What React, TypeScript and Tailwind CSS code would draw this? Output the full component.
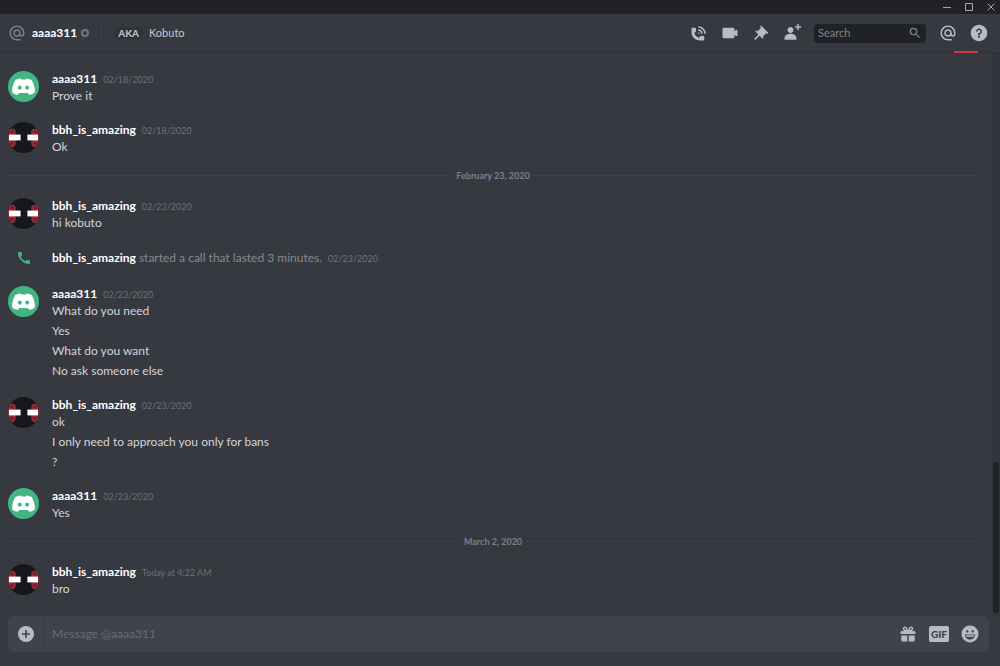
import type { ReactNode } from 'react';
import { MdAlternateEmail, MdCall, MdSearch } from 'react-icons/md';

interface Author {
  name: string;
  avatar: 'clyde' | 'mask';
}

type ChatItem =
  | { kind: 'group'; author: Author; date: string; lines: string[] }
  | { kind: 'call'; author: Author; date: string; text: string }
  | { kind: 'divider'; label: string };

const aaaa: Author = { name: 'aaaa311', avatar: 'clyde' };
const bbh: Author = { name: 'bbh_is_amazing', avatar: 'mask' };

const items: ChatItem[] = [
  { kind: 'group', author: aaaa, date: '02/18/2020', lines: ['Prove it'] },
  { kind: 'group', author: bbh, date: '02/18/2020', lines: ['Ok'] },
  { kind: 'divider', label: 'February 23, 2020' },
  { kind: 'group', author: bbh, date: '02/23/2020', lines: ['hi kobuto'] },
  { kind: 'call', author: bbh, date: '02/23/2020', text: 'started a call that lasted 3 minutes.' },
  {
    kind: 'group',
    author: aaaa,
    date: '02/23/2020',
    lines: ['What do you need', 'Yes', 'What do you want', 'No ask someone else'],
  },
  {
    kind: 'group',
    author: bbh,
    date: '02/23/2020',
    lines: ['ok', 'I only need to approach you only for bans', '?'],
  },
  { kind: 'group', author: aaaa, date: '02/23/2020', lines: ['Yes'] },
  { kind: 'divider', label: 'March 2, 2020' },
  { kind: 'group', author: bbh, date: 'Today at 4:22 AM', lines: ['bro'] },
];

const headerActions = [
  {
    label: 'Start Voice Call',
    path: 'M11 5V3C16.515 3 21 7.486 21 13H19C19 8.589 15.411 5 11 5ZM17 13H15C15 10.795 13.206 9 11 9V7C14.309 7 17 9.692 17 13ZM11 11V13H13C13 11.896 12.105 11 11 11ZM14 16H18C18.553 16 19 16.447 19 17V21C19 21.553 18.553 22 18 22H13C6.925 22 2 17.075 2 11V6C2 5.447 2.448 5 3 5H7C7.553 5 8 5.447 8 6V10C8 10.553 7.553 11 7 11H6C6.063 14.938 9 18 13 18V17C13 16.447 13.447 16 14 16Z',
  },
  {
    label: 'Start Video Call',
    path: 'M21.526 8.149C21.231 7.966 20.862 7.951 20.553 8.105L18 9.382V7C18 5.897 17.103 5 16 5H4C2.897 5 2 5.897 2 7V17C2 18.104 2.897 19 4 19H16C17.103 19 18 18.104 18 17V14.618L20.553 15.894C20.694 15.965 20.847 16 21 16C21.183 16 21.365 15.949 21.526 15.851C21.82 15.668 22 15.347 22 15V9C22 8.653 21.82 8.332 21.526 8.149Z',
  },
  {
    label: 'Pinned Messages',
    path: 'M22 12L12.101 2.101L10.686 3.514L12.101 4.929L7.151 9.879L5.736 8.465L4.322 9.88L8.565 14.122L2.908 19.778L4.322 21.192L9.979 15.536L14.222 19.778L15.636 18.364L14.222 16.95L19.171 12L20.586 13.414L22 12Z',
  },
  {
    label: 'Add Friends to DM',
    path: 'M21 3H24V5H21V8H19V5H16V3H19V0H21V3ZM10 12C12.205 12 14 10.205 14 8C14 5.795 12.205 4 10 4C7.795 4 6 5.795 6 8C6 10.205 7.795 12 10 12ZM10 13C5.289 13 2 15.467 2 19V21H18V19C18 15.467 14.711 13 10 13Z',
  },
];

const helpPath =
  'M12 1C5.9 1 1 5.9 1 12C1 18.1 5.9 23 12 23C18.1 23 23 18.1 23 12C23 5.9 18.1 1 12 1ZM12 18.5C11.2 18.5 10.6 17.9 10.6 17.1C10.6 16.3 11.2 15.7 12 15.7C12.8 15.7 13.4 16.3 13.4 17.1C13.4 17.9 12.8 18.5 12 18.5ZM13 13.875V15H11V12H12C13.104 12 14 11.103 14 10C14 8.896 13.104 8 12 8C10.896 8 10 8.896 10 10H8C8 7.795 9.795 6 12 6C14.205 6 16 7.795 16 10C16 11.861 14.723 13.429 13 13.875Z';

const giftPath =
  'M16.886 8H20C21.104 8 22 8.896 22 10V12H2V10C2 8.896 2.897 8 4 8H7.114C6.663 7.764 6.236 7.477 5.879 7.121C4.709 5.951 4.709 4.048 5.879 2.879C7.012 1.746 8.986 1.746 10.121 2.877C11.758 4.514 11.979 7.595 11.998 7.941L12 8L12.002 7.941C12.022 7.595 12.242 4.515 13.879 2.878C15.014 1.745 16.986 1.746 18.121 2.877C19.29 4.049 19.29 5.952 18.121 7.121C17.764 7.477 17.337 7.764 16.886 8ZM7.293 5.707C6.903 5.316 6.903 4.682 7.293 4.292C7.481 4.103 7.732 4 8 4C8.268 4 8.519 4.103 8.707 4.292C9.297 4.882 9.641 5.94 9.825 6.822C8.945 6.639 7.879 6.293 7.293 5.707ZM14.174 6.824C14.359 5.941 14.702 4.883 15.293 4.293C15.481 4.103 15.732 4 16 4C16.268 4 16.519 4.103 16.706 4.291C17.096 4.682 17.097 5.316 16.707 5.707C16.116 6.298 15.057 6.642 14.174 6.824ZM3 14H11V22H5C3.9 22 3 21.1 3 20V14ZM13 14V22H19C20.104 22 21 21.104 21 20V14H13Z';

const Glyph = ({ path }: { path: string }) => (
  <svg viewBox="0 0 24 24" className="size-[18px]" fill="currentColor" fillRule="evenodd" aria-hidden="true">
    <path d={path} />
  </svg>
);

const IconButton = ({ label, children }: { label: string; children: ReactNode }) => (
  <button type="button" aria-label={label} className="shrink-0 text-[#b9bbc3] hover:text-white">
    {children}
  </button>
);

const Avatar = ({ type }: { type: Author['avatar'] }) => {
  if (type === 'clyde') {
    return (
      <svg viewBox="0 0 32 32" className="size-[31px]" aria-hidden="true">
        <circle cx="16" cy="16" r="16" fill="#43b581" />
        <path
          fill="#fff"
          fillRule="evenodd"
          d="M7.6 9.4C9.4 8.4 11.2 7.9 13.1 7.8L13.7 8.8H18.3L18.9 7.8C20.8 7.9 22.6 8.4 24.4 9.4C26.6 13.2 27.9 17.4 27.8 22C26 23.8 24 24.5 21.8 24.6L20.4 22.8H11.6L10.2 24.6C8 24.5 6 23.8 4.2 22C4.1 17.4 5.4 13.2 7.6 9.4ZM12.2 14.9C11.1 14.9 10.2 15.9 10.2 17.1C10.2 18.3 11.1 19.3 12.2 19.3C13.3 19.3 14.2 18.3 14.2 17.1C14.2 15.9 13.3 14.9 12.2 14.9ZM19.8 14.9C18.7 14.9 17.8 15.9 17.8 17.1C17.8 18.3 18.7 19.3 19.8 19.3C20.9 19.3 21.8 18.3 21.8 17.1C21.8 15.9 20.9 14.9 19.8 14.9Z"
        />
      </svg>
    );
  }
  return (
    <svg viewBox="0 0 32 32" className="size-[31px]" aria-hidden="true">
      <clipPath id="avatar-round">
        <circle cx="16" cy="16" r="16" />
      </clipPath>
      <g clipPath="url(#avatar-round)">
        <rect width="32" height="32" fill="#17161a" />
        <path fill="#8f2b35" d="M0 7H6L8 9V23L6 26H0ZM32 7H26L24 9V23L26 26H32Z" />
        <path fill="#5a1d26" d="M3 9H5V11H3ZM3 21H5V23H3ZM27 9H29V11H27ZM27 21H29V23H27Z" />
        <rect x="1" y="13" width="12" height="6" fill="#fff" />
        <rect x="20" y="13" width="11" height="6" fill="#fff" />
      </g>
    </svg>
  );
};

const Timestamp = ({ children }: { children: ReactNode }) => (
  <time className="ml-1.5 text-[9px] font-normal text-[#6c6f78]">{children}</time>
);

const MessageRow = ({ item }: { item: ChatItem }) => {
  if (item.kind === 'divider') {
    return (
      <li className="mt-4 flex h-[9px] items-center gap-1 pr-2 text-[9px] font-bold text-[#7c7f88]">
        <span className="h-px flex-1 bg-[#3e4149]" />
        {item.label}
        <span className="h-px flex-1 bg-[#3e4149]" />
      </li>
    );
  }

  if (item.kind === 'call') {
    return (
      <li className="mt-[17px] flex h-5 items-center">
        <span className="flex w-11 shrink-0 pl-2">
          <MdCall className="size-4 text-[#43b581]" />
        </span>
        <p className="text-[12px] text-[#868992]">
          <strong className="font-bold text-white">{item.author.name}</strong> {item.text}
          <Timestamp>{item.date}</Timestamp>
        </p>
      </li>
    );
  }

  return (
    <li className="mt-[17px] flex">
      <div className="-mb-1 w-11 shrink-0 pt-px">
        <Avatar type={item.author.avatar} />
      </div>
      <div className="min-w-0">
        <div className="flex h-[17px] items-baseline leading-[17px]">
          <h3 className="text-[12px] font-bold text-white">{item.author.name}</h3>
          <Timestamp>{item.date}</Timestamp>
        </div>
        {item.lines.map((line) => (
          <p key={line} className="mb-[3px] text-[12px] leading-[17px] text-[#d4d5d9] last:mb-0">
            {line}
          </p>
        ))}
      </div>
    </li>
  );
};

const App = () => (
  <div className="flex h-screen flex-col bg-[#373941] font-[Lato,sans-serif] text-[#d4d5d9]">
    <div className="flex h-3.5 shrink-0 items-center justify-end gap-3 bg-[#202226] pr-1 text-[#a5a7ad]">
      <button type="button" aria-label="Minimize">
        <svg viewBox="0 0 10 10" className="size-2.5" fill="none" stroke="currentColor">
          <path d="M1 5.5H9" />
        </svg>
      </button>
      <button type="button" aria-label="Maximize">
        <svg viewBox="0 0 10 10" className="size-2.5" fill="none" stroke="currentColor">
          <path d="M1.5 1.5H8.5V8.5H1.5Z" />
        </svg>
      </button>
      <button type="button" aria-label="Close">
        <svg viewBox="0 0 10 10" className="size-2.5" fill="none" stroke="currentColor">
          <path d="M1.5 1.5L8.5 8.5M8.5 1.5L1.5 8.5" />
        </svg>
      </button>
    </div>

    <header className="relative flex h-[39px] shrink-0 items-center gap-[13px] border-b border-[#2d2f36] pr-3 pl-2">
      <div className="flex min-w-0 flex-1 items-center">
        <MdAlternateEmail className="size-[18px] shrink-0 text-[#7c7f88]" />
        <h1 className="ml-1.5 text-[12px] font-bold text-white">aaaa311</h1>
        <span className="ml-1 size-2 shrink-0 rounded-full border-2 border-[#747680]" />
        <span className="ml-3 h-4 w-px bg-[#3e4149]" />
        <span className="ml-3 rounded-full bg-[#303238] px-1 text-[10px] leading-3 font-bold text-[#c5c6cb]">AKA</span>
        <span className="ml-1.5 text-[11px] text-[#c5c6cb]">Kobuto</span>
      </div>
      {headerActions.map((action) => (
        <IconButton key={action.label} label={action.label}>
          <Glyph path={action.path} />
        </IconButton>
      ))}
      <label className="flex h-[19px] w-28 items-center rounded-sm bg-[#202226] px-1">
        <input
          type="text"
          placeholder="Search"
          aria-label="Search"
          className="min-w-0 flex-1 bg-transparent text-[11px] outline-none placeholder:text-[#82848c]"
        />
        <MdSearch className="size-3.5 shrink-0 text-[#82848c]" />
      </label>
      <IconButton label="Mentions">
        <MdAlternateEmail className="size-[18px]" />
      </IconButton>
      <IconButton label="Help">
        <Glyph path={helpPath} />
      </IconButton>
      <span className="absolute right-[22px] -bottom-px h-0.5 w-6 bg-[#c93a40]" />
    </header>

    <main className="flex min-h-0 flex-1">
      <ol className="min-w-0 flex-1 overflow-hidden pr-1.5 pl-2">
        {items.map((item, index) => (
          <MessageRow key={index} item={item} />
        ))}
      </ol>
      <div className="flex w-2 shrink-0 flex-col justify-end bg-[#33353c] px-px pb-[3px]">
        <div className="h-[27%] rounded-full bg-[#202127]" />
      </div>
    </main>

    <form className="mr-[11px] mb-3.5 ml-2 flex h-9 shrink-0 items-center rounded-md bg-[#40434b] pr-2.5">
      <div className="flex h-full w-9 shrink-0 items-center justify-center border-r border-[#393c43]">
        <IconButton label="Attach file">
          <svg viewBox="0 0 18 18" className="size-[18px]" aria-hidden="true">
            <circle cx="9" cy="9" r="8" fill="currentColor" />
            <path d="M9 5V13M5 9H13" stroke="#40434b" strokeWidth="1.6" />
          </svg>
        </IconButton>
      </div>
      <input
        type="text"
        aria-label="Message @aaaa311"
        placeholder="Message @aaaa311"
        className="min-w-0 flex-1 bg-transparent px-2 text-[12px] outline-none placeholder:text-[#686b74]"
      />
      <div className="flex items-center gap-3">
        <IconButton label="Send a gift">
          <Glyph path={giftPath} />
        </IconButton>
        <IconButton label="Open GIF picker">
          <span className="block h-4 w-5 rounded-xs bg-[#b9bbc3] text-center text-[10px] leading-4 font-black text-[#40434b]">
            GIF
          </span>
        </IconButton>
        <IconButton label="Select emoji">
          <svg viewBox="0 0 18 18" className="size-[18px]" aria-hidden="true">
            <circle cx="9" cy="9" r="8.5" fill="currentColor" />
            <ellipse cx="6.3" cy="6.3" rx="1" ry="1.4" fill="#40434b" />
            <ellipse cx="11.7" cy="6.3" rx="1" ry="1.4" fill="#40434b" />
            <path d="M4 9.5H14C14 12.5 11.8 14.6 9 14.6C6.2 14.6 4 12.5 4 9.5Z" fill="#40434b" />
            <path d="M5.2 10.2H12.8V11.8H5.2Z" fill="currentColor" />
          </svg>
        </IconButton>
      </div>
    </form>
  </div>
);

export default App;
